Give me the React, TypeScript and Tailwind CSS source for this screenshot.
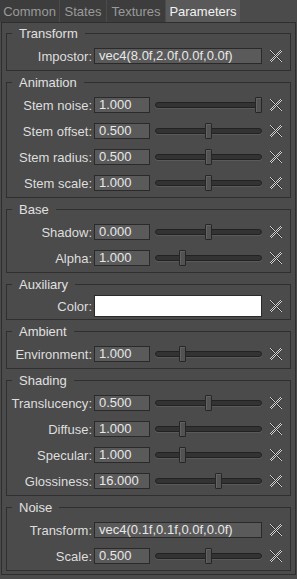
type Row =
  | { label: string; kind: 'text'; value: string }
  | { label: string; kind: 'color' }
  | { label: string; kind: 'slider'; value: string; pos: number }

const groups: { title: string; rows: Row[] }[] = [
  { title: 'Transform', rows: [{ label: 'Impostor', kind: 'text', value: 'vec4(8.0f,2.0f,0.0f,0.0f)' }] },
  {
    title: 'Animation',
    rows: [
      { label: 'Stem noise', kind: 'slider', value: '1.000', pos: 1 },
      { label: 'Stem offset', kind: 'slider', value: '0.500', pos: 0.5 },
      { label: 'Stem radius', kind: 'slider', value: '0.500', pos: 0.5 },
      { label: 'Stem scale', kind: 'slider', value: '1.000', pos: 0.5 },
    ],
  },
  {
    title: 'Base',
    rows: [
      { label: 'Shadow', kind: 'slider', value: '0.000', pos: 0.5 },
      { label: 'Alpha', kind: 'slider', value: '1.000', pos: 0.24 },
    ],
  },
  { title: 'Auxiliary', rows: [{ label: 'Color', kind: 'color' }] },
  { title: 'Ambient', rows: [{ label: 'Environment', kind: 'slider', value: '1.000', pos: 0.24 }] },
  {
    title: 'Shading',
    rows: [
      { label: 'Translucency', kind: 'slider', value: '0.500', pos: 0.5 },
      { label: 'Diffuse', kind: 'slider', value: '1.000', pos: 0.24 },
      { label: 'Specular', kind: 'slider', value: '1.000', pos: 0.24 },
      { label: 'Glossiness', kind: 'slider', value: '16.000', pos: 0.6 },
    ],
  },
  {
    title: 'Noise',
    rows: [
      { label: 'Transform', kind: 'text', value: 'vec4(0.1f,0.1f,0.0f,0.0f)' },
      { label: 'Scale', kind: 'slider', value: '0.500', pos: 0.5 },
    ],
  },
]

const tabs = [
  { name: 'Common', w: 'w-[59px]' },
  { name: 'States', w: 'w-[46px]' },
  { name: 'Textures', w: 'w-[58px]' },
  { name: 'Parameters', w: 'w-[74px]' },
]

// checkered "reset" cross, drawn pixel by pixel
const crossCells: { x: number; y: number; light: boolean }[] = []
for (let y = 0; y < 12; y++) {
  for (let x = 0; x < 12; x++) {
    if (Math.abs(x - y) <= 1 || Math.abs(x + y - 11) <= 1) {
      crossCells.push({ x, y, light: (x + y) % 2 === 0 })
    }
  }
}

function ResetIcon() {
  return (
    <svg width="12" height="12" viewBox="0 0 12 12" shapeRendering="crispEdges" className="shrink-0">
      {crossCells.map((c) => (
        <rect key={c.x + '-' + c.y} x={c.x} y={c.y} width="1" height="1" fill={c.light ? '#d4d4d4' : '#303030'} />
      ))}
    </svg>
  )
}

function Slider({ pos }: { pos: number }) {
  return (
    <div className="relative ml-[5px] flex h-[16px] w-[107px] items-center">
      <div className="h-[6px] w-full rounded-full border border-[#222222] bg-[#333333] shadow-[0_1px_0_#5a5a5a]" />
      <div
        className="absolute top-0 h-[16px] w-[7px] rounded-[1px] border border-[#262626] bg-[#525252] shadow-[inset_1px_1px_0_#626262]"
        style={{ left: Math.round(pos * 100) }}
      />
    </div>
  )
}

function FieldRow({ row }: { row: Row }) {
  return (
    <div className={`flex items-center ${row.kind === 'color' ? 'h-[22px]' : 'h-[16px]'}`}>
      <div className="w-[85px] text-right text-[13px] leading-[15px] text-[#dedede]">{row.label}:</div>
      {row.kind === 'text' && (
        <div className="ml-[2px] h-[16px] w-[168px] border border-[#2a2a2a] bg-[#5a5a5a] pl-[4px] text-[13px] leading-[14px] text-[#e8e8e8]">
          {row.value}
        </div>
      )}
      {row.kind === 'color' && <div className="ml-[2px] h-[22px] w-[168px] border border-[#2a2a2a] bg-white" />}
      {row.kind === 'slider' && (
        <>
          <div className="ml-[2px] h-[16px] w-[56px] border border-[#2a2a2a] bg-[#5a5a5a] pl-[4px] text-[13px] leading-[14px] text-[#e8e8e8]">
            {row.value}
          </div>
          <Slider pos={row.pos} />
        </>
      )}
      <div className="ml-[8px] flex items-center">
        <ResetIcon />
      </div>
    </div>
  )
}

export default function App() {
  return (
    <div className="h-[579px] w-[297px] overflow-hidden bg-[#4b4b4b] font-['Liberation_Sans',Arial,sans-serif]">
      {/* Tabs */}
      <div className="flex h-[22px] gap-[1px]">
        {tabs.map((t) => (
          <div
            key={t.name}
            className={`flex h-[22px] items-center justify-center text-[13px] leading-[15px] ${t.w} ${
              t.name === 'Parameters' ? 'bg-[#595959] text-[#f2f2f2]' : 'bg-[#3d3d3d] text-[#9a9a9a]'
            }`}
          >
            {t.name}
          </div>
        ))}
      </div>

      {/* Panel */}
      <div className="ml-[1px] flex w-[295px] flex-col gap-[4px] border border-[#2e2e2e] px-[4px] pt-[3px] pb-[3px]">
        {groups.map((g) => {
          const isColor = g.rows[0].kind === 'color'
          return (
            <fieldset
              key={g.title}
              className={`border border-[#2f2f2f] ${isColor ? 'pt-[3px] pb-[2px]' : 'pt-[7px] pb-[6px]'}`}
            >
              <legend className="ml-[5px] px-[7px] text-[13px] leading-[15px] text-[#e0e0e0]">{g.title}</legend>
              <div className="flex flex-col gap-[10px]">
                {g.rows.map((r) => (
                  <FieldRow key={r.label} row={r} />
                ))}
              </div>
            </fieldset>
          )
        })}
      </div>
    </div>
  )
}
